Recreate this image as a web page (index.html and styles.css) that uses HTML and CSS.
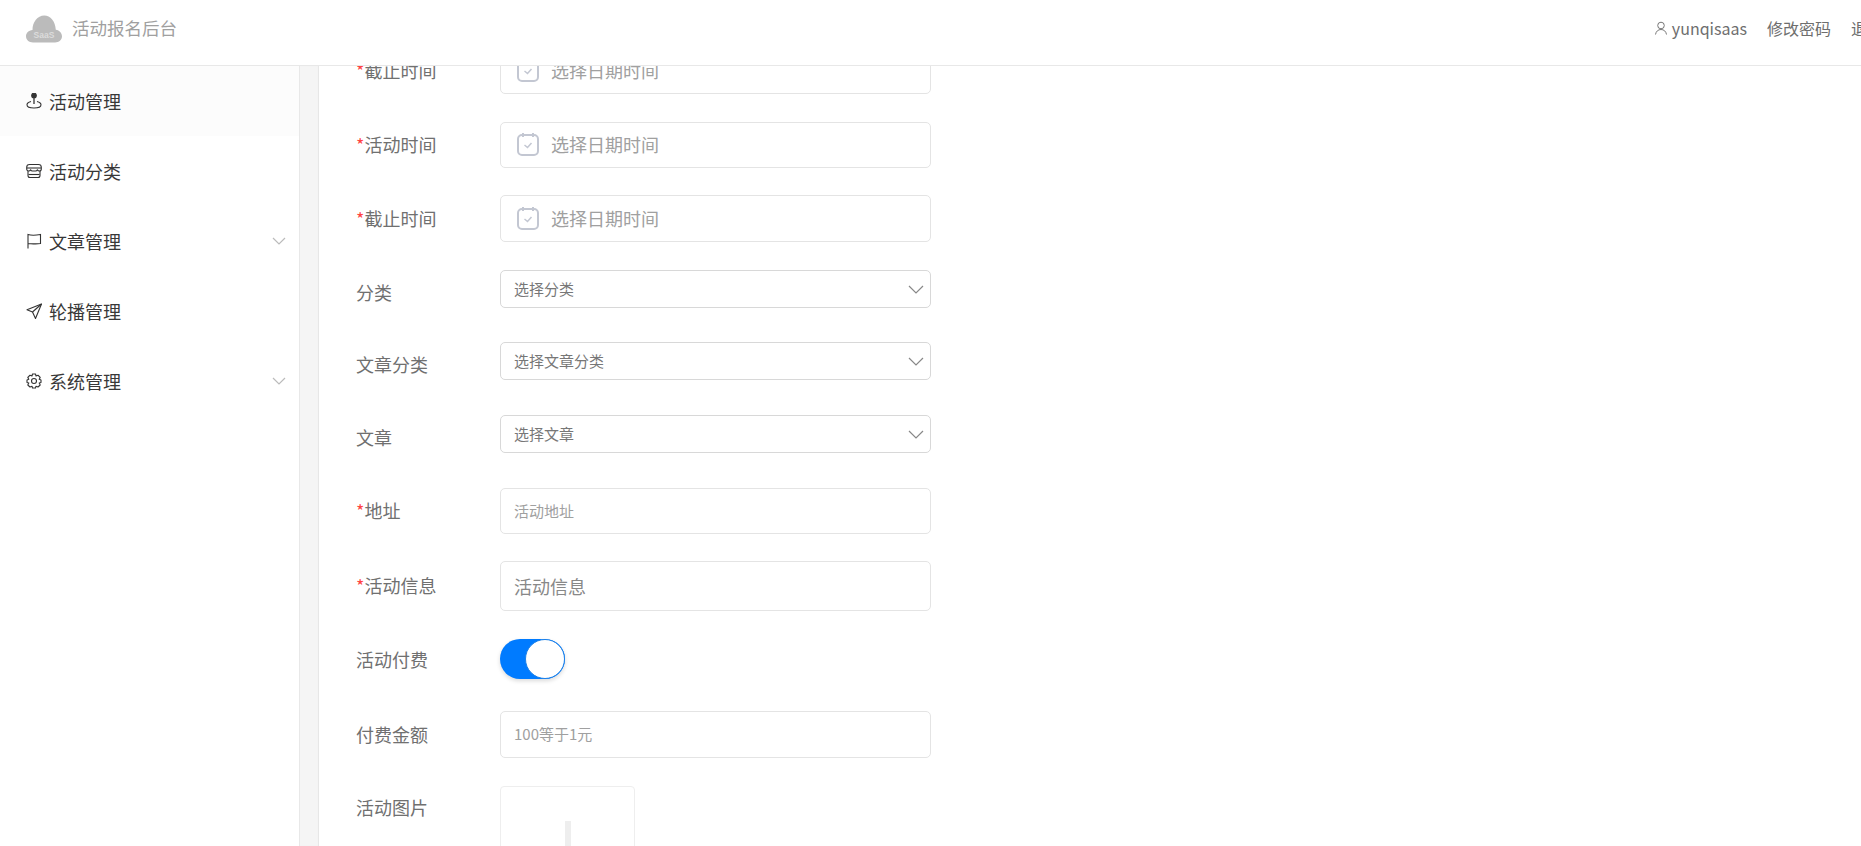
FILE: index.html
```html
<!DOCTYPE html>
<html lang="zh">
<head>
<meta charset="utf-8">
<title>活动报名后台</title>
<link rel="stylesheet" href="styles.css">
</head>
<body>
<header class="header">
  <div class="brand">
    <svg class="logo" viewBox="0 0 36 28" width="36" height="28"><path d="M7 27.500C3 27.500 0 24.800 0 21.300C0 18 2.600 15.400 6.500 15C6.500 7 11.500 0.500 18.200 0.500C24.500 0.500 29.300 6.500 29.800 14.700C33.500 15.300 36 18 36 21.300C36 24.800 33 27.500 29 27.500Z" fill="#bbb"/><text x="18" y="23" text-anchor="middle" class="logo-text">SaaS</text></svg>
    <span class="brand-name">活动报名后台</span>
  </div>
  <nav class="top-nav">
    <span class="user"><svg viewBox="0 0 14 14" width="14" height="14" fill="none" stroke="#777" stroke-width="1"><circle cx="7" cy="4.500" r="3.300"/><path d="M1.500 13.500C2 10.300 4.200 8.500 7 8.500C9.800 8.500 12 10.300 12.500 13.500"/></svg>yunqisaas</span>
    <span>修改密码</span>
    <span>退出</span>
  </nav>
</header>
<div class="layout">
  <aside class="sidebar">
    <ul class="menu">
      <li class="menu-item active">
        <svg class="mi" viewBox="0 0 16 16" fill="none" stroke="#333" stroke-width="1.100"><circle cx="8" cy="2.500" r="2.300" fill="#333"/><path d="M8 4V11" stroke-width="1.300"/><path d="M5 8.500C2.500 9.200 1 10.300 1 11.700C1 13.700 4.100 15 8 15C11.900 15 15 13.700 15 11.700C15 10.300 13.500 9.200 11 8.500"/></svg>
        <span>活动管理</span>
      </li>
      <li class="menu-item">
        <svg class="mi" viewBox="0 0 16 16" fill="none" stroke="#333" stroke-width="1.100" stroke-linejoin="round"><path d="M3.500 1.500H12.500C14 1.500 15.300 2.800 15.300 4.300V6C15.300 7.200 14.500 8 13.400 8C12.400 8 11.700 7.400 11.400 6.700C11 7.500 10.300 8 9.600 8H6.400C5.700 8 5 7.500 4.600 6.700C4.300 7.400 3.600 8 2.600 8C1.500 8 0.700 7.200 0.700 6V4.300C0.700 2.800 2 1.500 3.500 1.500Z"/><path d="M1 5H15"/><path d="M2 8V12.500C2 13.800 3 14.500 4 14.500H12C13 14.500 14 13.800 14 12.500V8"/><path d="M2.500 11.500H13.500"/></svg>
        <span>活动分类</span>
      </li>
      <li class="menu-item">
        <svg class="mi" viewBox="0 0 16 16" fill="none" stroke="#333" stroke-width="1.100"><path d="M2 15.500V1.500C5 2.500 9 2.500 14.500 1.500V10.500C9 11.500 5 10.500 2 10.500"/></svg>
        <span>文章管理</span>
        <svg class="chev" viewBox="0 0 14 8" fill="none" stroke="#bbb" stroke-width="1.200"><path d="M1 1L7 7L13 1"/></svg>
      </li>
      <li class="menu-item">
        <svg class="mi" viewBox="0 0 16 16" fill="none" stroke="#333" stroke-width="1.100" stroke-linejoin="round"><path d="M15.500 1L1 6.700L6.500 9L9.500 15.500Z"/><path d="M15.500 1L6.500 9"/></svg>
        <span>轮播管理</span>
      </li>
      <li class="menu-item">
        <svg class="mi" viewBox="0 0 16 16" fill="none" stroke="#333" stroke-width="1.100" stroke-linejoin="round"><circle cx="8" cy="8" r="2.500"/><path d="M6.500 1H9.500L10 3L12 2.200L14.200 4.500L13.200 6.300L15 7V9.500L13.200 10L14.200 12L12 14L10 13.200L9.500 15H6.500L6 13.200L4 14L1.800 12L2.800 10L1 9.500V7L2.800 6.300L1.800 4.500L4 2.200L6 3Z"/></svg>
        <span>系统管理</span>
        <svg class="chev" viewBox="0 0 14 8" fill="none" stroke="#bbb" stroke-width="1.200"><path d="M1 1L7 7L13 1"/></svg>
      </li>
    </ul>
  </aside>
  <div class="gutter"></div>
  <main class="main">
    <form class="form">
      <div class="row">
        <label class="label"><i>*</i>截止时间</label>
        <div class="control date"><svg class="cal" viewBox="0 0 22 24" fill="none" stroke="#c3c7d2" stroke-width="2"><rect x="1" y="3" width="20" height="20" rx="4"/><path d="M6 1V5M16 1V5"/><path d="M7.500 13L10.500 15.500L14.500 11" stroke-width="1.500"/></svg><span>选择日期时间</span></div>
      </div>
      <div class="row row-close">
        <label class="label"><i>*</i>活动时间</label>
        <div class="control date"><svg class="cal" viewBox="0 0 22 24" fill="none" stroke="#c3c7d2" stroke-width="2"><rect x="1" y="3" width="20" height="20" rx="4"/><path d="M6 1V5M16 1V5"/><path d="M7.500 13L10.500 15.500L14.500 11" stroke-width="1.500"/></svg><span>选择日期时间</span></div>
      </div>
      <div class="row">
        <label class="label"><i>*</i>截止时间</label>
        <div class="control date date-tall"><svg class="cal" viewBox="0 0 22 24" fill="none" stroke="#c3c7d2" stroke-width="2"><rect x="1" y="3" width="20" height="20" rx="4"/><path d="M6 1V5M16 1V5"/><path d="M7.500 13L10.500 15.500L14.500 11" stroke-width="1.500"/></svg><span>选择日期时间</span></div>
      </div>
      <div class="row row-select row-select-first">
        <label class="label">分类</label>
        <div class="control select"><span>选择分类</span><svg class="sel-chev" viewBox="0 0 16 9" fill="none" stroke="#888" stroke-width="1.200"><path d="M1 1L8 8L15 1"/></svg></div>
      </div>
      <div class="row row-select">
        <label class="label">文章分类</label>
        <div class="control select"><span>选择文章分类</span><svg class="sel-chev" viewBox="0 0 16 9" fill="none" stroke="#888" stroke-width="1.200"><path d="M1 1L8 8L15 1"/></svg></div>
      </div>
      <div class="row row-select">
        <label class="label">文章</label>
        <div class="control select"><span>选择文章</span><svg class="sel-chev" viewBox="0 0 16 9" fill="none" stroke="#888" stroke-width="1.200"><path d="M1 1L8 8L15 1"/></svg></div>
      </div>
      <div class="row row-close">
        <label class="label"><i>*</i>地址</label>
        <div class="control text small"><span>活动地址</span></div>
      </div>
      <div class="row">
        <label class="label label-up"><i>*</i>活动信息</label>
        <div class="control text tall"><span>活动信息</span></div>
      </div>
      <div class="row row-toggle">
        <label class="label label-down">活动付费</label>
        <div class="toggle"><span class="knob"></span></div>
      </div>
      <div class="row">
        <label class="label">付费金额</label>
        <div class="control text small pay"><span>100等于1元</span></div>
      </div>
      <div class="row row-image">
        <label class="label">活动图片</label>
        <div class="upload"><span class="plus"></span></div>
      </div>
    </form>
  </main>
</div>
</body>
</html>
```
FILE: styles.css
```css
* { box-sizing: border-box; }
html, body { margin: 0; height: 100%; overflow: hidden; background: #fff; }
body { font-family: "Noto Sans CJK SC", "Noto Sans", sans-serif; color: #666; }
.header { height: 66px; display: flex; align-items: center; justify-content: space-between; border-bottom: 1px solid #e8e8e8; background: #fff; position: relative; z-index: 2; }
.brand { display: flex; align-items: center; padding-left: 26px; margin-top: -7px; }
.logo { display: block; }
.logo-text { font-family: "Liberation Sans", sans-serif; font-size: 8.5px; font-weight: 700; fill: #dcdcdc; }
.brand-name { margin-left: 10px; margin-bottom: 4px; font-size: 17.5px; color: #a0a0a0; }
.top-nav { display: flex; align-items: center; gap: 20px; font-size: 16px; color: #6e6e6e; margin-right: -22px; white-space: nowrap; margin-top: -10px; }
.user { display: flex; align-items: center; gap: 4px; }
.layout { display: flex; height: 780px; }
.sidebar { width: 300px; flex: none; border-right: 1px solid #e8e8e8; background: #fff; }
.menu { list-style: none; margin: 0; padding: 0; }
.menu-item { height: 70px; display: flex; align-items: center; padding: 0 13px 0 26px; font-size: 18px; color: #383838; }
.menu-item.active { background: #fcfcfc; }
.menu-item span { flex: 1; margin-left: 7px; margin-bottom: 1px; }
.mi { width: 16px; height: 16px; flex: none; }
.chev { width: 14px; height: 8px; flex: none; }
.gutter { width: 19px; flex: none; background: #f5f5f5; box-shadow: inset -1px 0 1px #e6e6e6; }
.main { flex: 1; overflow: hidden; background: #fff; }
.form { padding-left: 37px; margin-top: -18px; }
.row { display: flex; align-items: center; margin-bottom: 28px; }
.row-close { margin-bottom: 27px; }
.row-select { margin-bottom: 35px; }
.row-select-first { margin-bottom: 34px; }
.row-toggle { margin-bottom: 32px; }
.row-image { align-items: flex-start; }
.label { width: 144px; flex: none; font-size: 18px; line-height: 24px; color: #707070; margin-bottom: 2px; }
.label i { color: #f44; font-style: normal; }
.row-select .label { margin-top: 5px; margin-bottom: 0; }
.label-down { margin-top: 1px; }
.row-image .label { margin-top: 9px; }
.control { width: 431px; flex: none; border: 1px solid #e4e4e4; border-radius: 5px; display: flex; align-items: center; background: #fff; }
.date { height: 46px; padding: 0 0 2px 16px; font-size: 18px; color: #a0a0a0; }
.date-tall { height: 47px; }
.cal { width: 22px; height: 24px; flex: none; margin-right: 12px; }
.select { height: 38px; padding: 0 6px 0 13px; justify-content: space-between; font-size: 15px; color: #777; border-color: #d8d8d8; }
.select span { margin-bottom: 2px; }
.sel-chev { width: 16px; height: 9px; }
.text { padding-left: 13px; color: #888; }
.small { height: 46px; font-size: 15px; color: #a0a0a0; padding-bottom: 2px; }
.pay { height: 47px; }
.tall { height: 50px; font-size: 18px; }
.toggle { width: 65px; height: 40px; border-radius: 20px; background: #007bff; position: relative; box-shadow: 0 2px 4px rgba(0,0,0,.15); }
.knob { position: absolute; right: 0; top: 0; width: 40px; height: 40px; border-radius: 50%; background: #fff; border: 1px solid #1a7fe8; }
.upload { width: 135px; height: 135px; border: 1px solid #eee; border-radius: 4px; display: flex; align-items: center; justify-content: center; }
.plus { width: 6px; height: 65px; background: #eee; }
```
